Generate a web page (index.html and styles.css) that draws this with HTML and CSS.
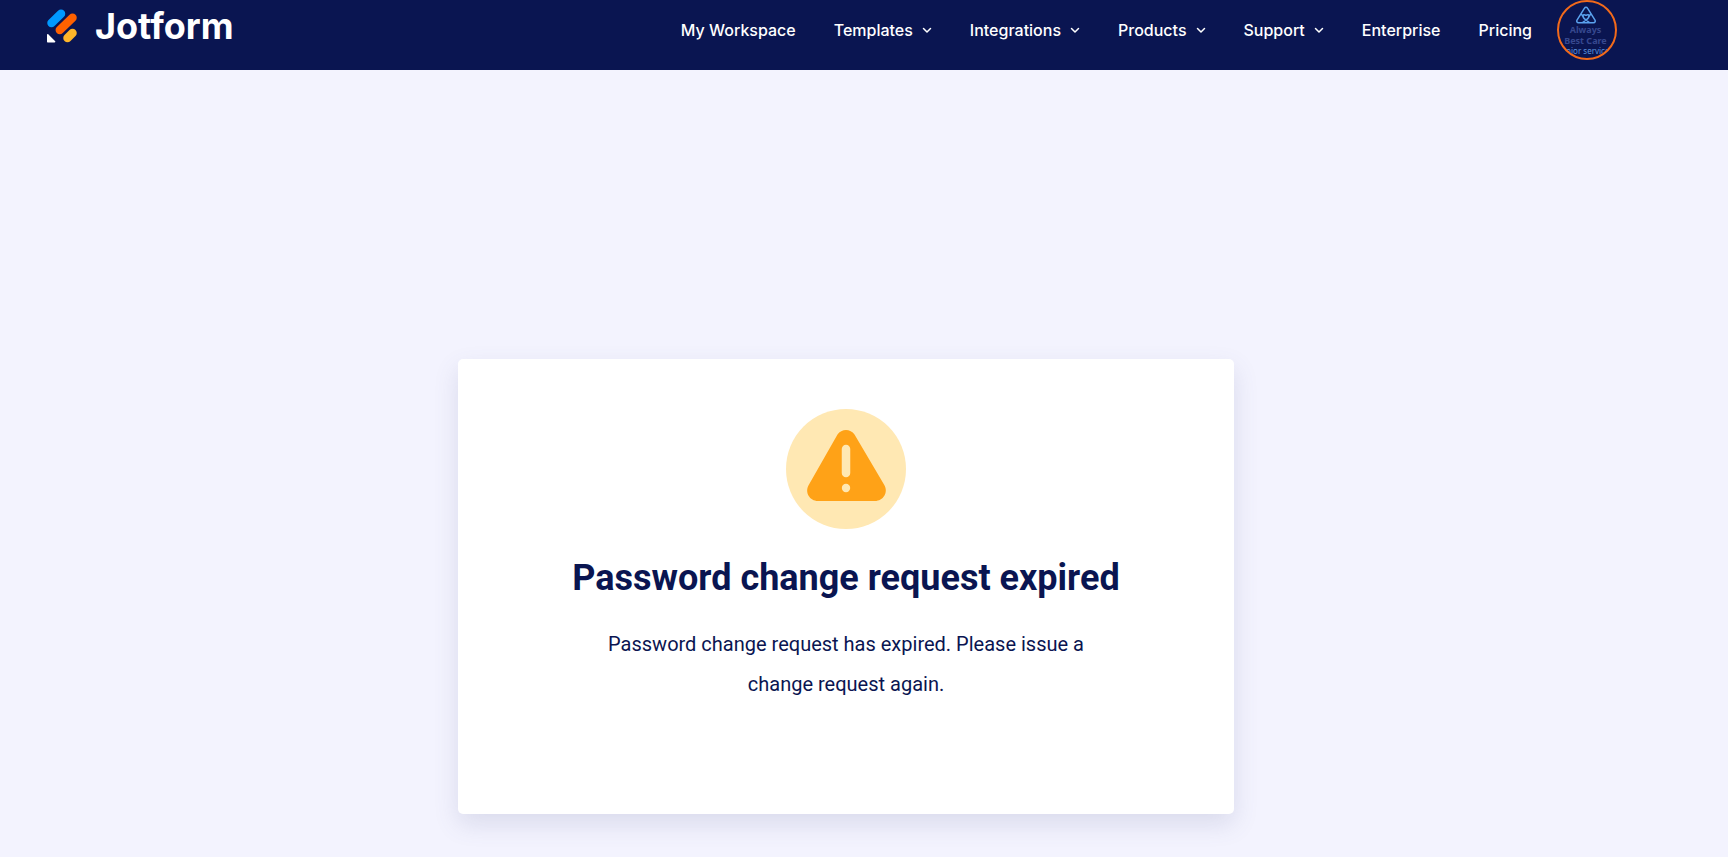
FILE: index.html
```
<!DOCTYPE html>
<html lang="en">
<head>
    <meta charset="UTF-8">
    <title>Password change request expired</title>
    <link rel="stylesheet" href="styles.css">
</head>
<body>
    <header class="header">
        <a class="logo" href="#">
            <svg class="logo-mark" viewBox="0 0 32 34" width="32" height="34" aria-hidden="true">
                <g fill="none" stroke-width="8.500" stroke-linecap="round">
                    <path d="M5.500 14 15 4.700" stroke="#0099ff"/>
                    <path d="M13.800 21 26.500 8.700" stroke="#ff6100"/>
                    <path d="M21.500 29 26.500 24" stroke="#ffb629"/>
                </g>
                <path d="M1 26c0-1 .8-1.200 1.500-.500l6.500 6.500c.7.700.300 1.500-.5 1.500H2c-.6 0-1-.4-1-1z" fill="#fff"/>
            </svg>
            <span class="logo-name">Jotform</span>
        </a>
        <nav class="nav">
            <a class="nav-link" href="#">My Workspace</a>
            <button class="nav-link" type="button">Templates
                <svg class="chevron" viewBox="0 0 10 10" aria-hidden="true"><path d="M1.500 3.500 5 7l3.500-3.500"/></svg>
            </button>
            <button class="nav-link" type="button">Integrations
                <svg class="chevron" viewBox="0 0 10 10" aria-hidden="true"><path d="M1.500 3.500 5 7l3.500-3.500"/></svg>
            </button>
            <button class="nav-link" type="button">Products
                <svg class="chevron" viewBox="0 0 10 10" aria-hidden="true"><path d="M1.500 3.500 5 7l3.500-3.500"/></svg>
            </button>
            <button class="nav-link" type="button">Support
                <svg class="chevron" viewBox="0 0 10 10" aria-hidden="true"><path d="M1.500 3.500 5 7l3.500-3.500"/></svg>
            </button>
            <a class="nav-link" href="#">Enterprise</a>
            <a class="nav-link" href="#">Pricing</a>
        </nav>
        <button class="avatar" type="button">
            <svg class="avatar-mark" viewBox="0 0 22 18" width="22" height="18" aria-hidden="true">
                <path d="M9.500 2.200c.7-1.200 2.300-1.200 3 0l7.500 12c.7 1.200 0 2.600-1.500 2.600H3.500c-1.500 0-2.200-1.400-1.500-2.600z"/>
                <path d="M11 14C6.500 11 7.500 7.200 11 9.300c3.500-2.100 4.500 1.700 0 4.700zM11 14l-3.500 2.700M11 14l3.500 2.700M7.800 10.500 6.300 7.800M14.200 10.500l1.500-2.700"/>
            </svg>
            <span class="avatar-name">Always<br>Best Care</span>
            <span class="avatar-tag">senior services</span>
        </button>
    </header>

    <main class="content">
        <section class="card">
            <svg class="warning" viewBox="0 0 120 120" width="120" height="120" aria-hidden="true">
                <circle cx="60" cy="60" r="60" fill="#ffe8b3"/>
                <path d="M51.500 25.500c4-6 13-6 17 0L98 75.500c5 8-1 16.500-9 16.500H32c-8 0-14-8.500-9-16.500z" fill="#ffa217"/>
                <path d="M60 40v24" stroke="#ffe8b3" stroke-width="8.500" stroke-linecap="round"/>
                <circle cx="60" cy="79" r="4.200" fill="#ffe8b3"/>
            </svg>
            <h1>Password change request expired</h1>
            <p>Password change request has expired. Please issue a change request again.</p>
        </section>
    </main>
</body>
</html>
```
FILE: styles.css
```
* {
    box-sizing: border-box;
}
body {
    margin: 0;
    min-height: 100vh;
    background: #f3f3fe;
    color: #0a1551;
    font-family: Inter, "Liberation Sans", sans-serif;
}
.header {
    display: flex;
    align-items: center;
    padding: 0 111px 10px 46px;
    background: #0a1551;
}
.logo {
    display: flex;
    align-items: center;
    gap: 17px;
    margin-right: auto;
    padding-bottom: 8px;
    color: #fff;
    text-decoration: none;
}
.logo-name {
    font-size: 36px;
    line-height: 36px;
    font-weight: 700;
}
.nav {
    display: flex;
    gap: 38px;
}
.nav-link {
    display: flex;
    align-items: center;
    gap: 9px;
    padding: 0;
    border: none;
    background: none;
    color: #fff;
    font-family: inherit;
    font-size: 16px;
    line-height: 24px;
    font-weight: 500;
    text-decoration: none;
    white-space: nowrap;
    cursor: pointer;
}
.chevron {
    width: 10px;
    height: 10px;
    fill: none;
    stroke: #fff;
    stroke-width: 1.5;
    stroke-linecap: round;
    stroke-linejoin: round;
}
.avatar {
    display: flex;
    flex-direction: column;
    align-items: center;
    width: 60px;
    height: 60px;
    margin-left: 25px;
    padding: 4px 3px 0 0;
    overflow: hidden;
    border: 2px solid #f26a1b;
    border-radius: 50%;
    background: none;
    font-family: "Noto Sans", sans-serif;
    white-space: nowrap;
    cursor: pointer;
}
.avatar-mark {
    flex: none;
    fill: none;
    stroke: #5aa2ee;
    stroke-width: 1.5;
    stroke-linejoin: round;
}
.avatar-name {
    color: #36488f;
    font-size: 9px;
    line-height: 11px;
    font-weight: 700;
}
.avatar-tag {
    color: #5d93de;
    font-size: 8px;
    line-height: 10px;
}
.content {
    display: flex;
    justify-content: center;
    padding: 289px 36px 40px 0;
}
.card {
    display: flex;
    flex-direction: column;
    align-items: center;
    width: 100%;
    max-width: 776px;
    padding: 50px 100px 110px;
    border-radius: 5px;
    background: #fff;
    box-shadow: 0 10px 24px rgba(84, 95, 140, 0.16);
    font-family: Roboto, "Liberation Sans", sans-serif;
    text-align: center;
}
h1 {
    margin: 25px 0 22px;
    font-size: 36px;
    line-height: 48px;
    font-weight: 700;
}
p {
    max-width: 500px;
    margin: 0;
    font-size: 20px;
    line-height: 40px;
}
```
